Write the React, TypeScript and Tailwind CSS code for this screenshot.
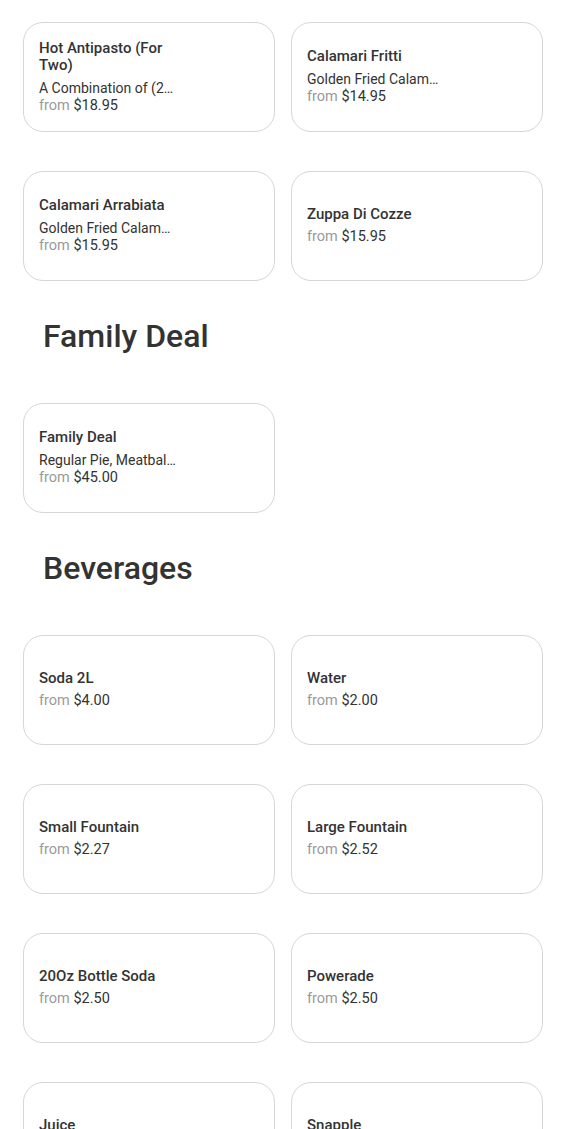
import React from "react";

type Item = { name: string; desc?: string; price: string };

const appetizers: Item[] = [
  { name: "Hot Antipasto (For Two)", desc: "A Combination of (2) Hot Appetizers", price: "$18.95" },
  { name: "Calamari Fritti", desc: "Golden Fried Calamari with Marinara", price: "$14.95" },
  { name: "Calamari Arrabiata", desc: "Golden Fried Calamari, Spicy Sauce", price: "$15.95" },
  { name: "Zuppa Di Cozze", price: "$15.95" },
];

const family: Item[] = [
  { name: "Family Deal", desc: "Regular Pie, Meatballs, Salad", price: "$45.00" },
];

const beverages: Item[] = [
  { name: "Soda 2L", price: "$4.00" },
  { name: "Water", price: "$2.00" },
  { name: "Small Fountain", price: "$2.27" },
  { name: "Large Fountain", price: "$2.52" },
  { name: "20Oz Bottle Soda", price: "$2.50" },
  { name: "Powerade", price: "$2.50" },
  { name: "Juice", price: "$2.50" },
  { name: "Snapple", price: "$2.75" },
];

const ItemCard = ({ item }: { item: Item }) => {
  return (
    <div className="h-[110px] rounded-[20px] border border-[#d6d6d6] bg-white pl-[15px] flex items-center">
      <div className="w-[138px] text-[#333333]">
        <p className="text-[15px] font-medium leading-[17px]">{item.name}</p>
        {item.desc && (
          <p className="mt-[5px] text-[14px] leading-[18px] truncate">{item.desc}</p>
        )}
        <p className={`text-[14.5px] leading-[18px] ${item.desc ? "" : "mt-[5px]"}`}>
          <span className="text-[#9a9a9a]">from</span> {item.price}
        </p>
      </div>
    </div>
  );
};

const Grid = ({ items }: { items: Item[] }) => {
  return (
    <div className="grid grid-cols-[252px_252px] gap-x-[16px] gap-y-[39px]">
      {items.map((it) => (
        <ItemCard key={it.name} item={it} />
      ))}
    </div>
  );
};

const Heading = ({ title }: { title: string }) => (
  <h2 className="mt-[35px] mb-[47px] pl-[20px] h-[40px] leading-[40px] text-[32px] font-medium text-[#333333]">
    {title}
  </h2>
);

const App = () => {
  return (
    <div
      className="min-h-screen bg-white pl-[23px] pt-[22px] pb-10"
      style={{ fontFamily: "Roboto, 'Liberation Sans', sans-serif" }}
    >
      <Grid items={appetizers} />
      <Heading title="Family Deal" />
      <Grid items={family} />
      <Heading title="Beverages" />
      <Grid items={beverages} />
    </div>
  );
};

export default App;
